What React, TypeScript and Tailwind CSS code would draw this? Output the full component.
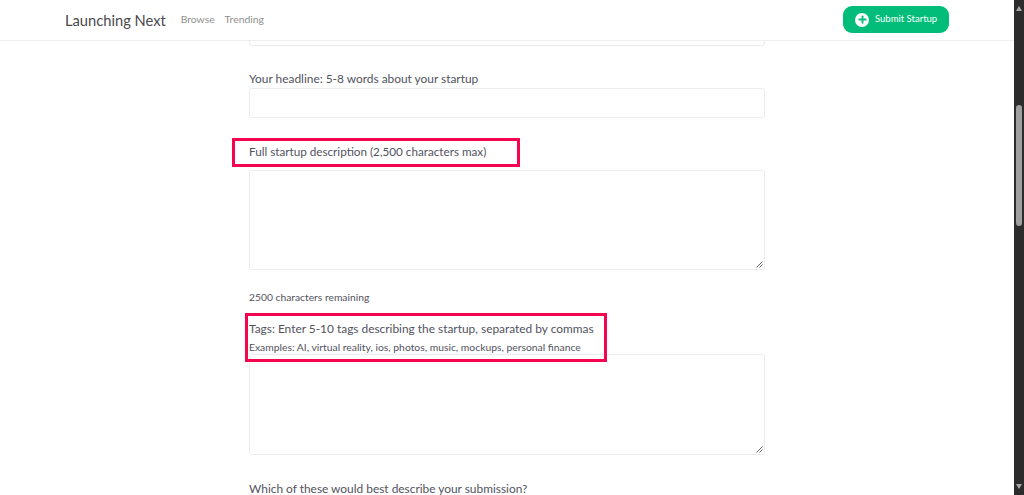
import { Plus } from "lucide-react";

const fieldClass = "block w-full rounded-[3px] border border-[#ececec] bg-white";

function Resizer() {
  return (
    <svg className="absolute right-[1px] bottom-[1px]" width="7" height="7" viewBox="0 0 7 7">
      <path d="M6.5 0.5L0.5 6.5M6.5 3.5L3.5 6.5" stroke="#666" strokeWidth="1" fill="none" />
    </svg>
  );
}

export default function App() {
  return (
    <div className="flex h-[495px] w-[1024px] overflow-hidden bg-white font-['Lato',sans-serif] text-[#52525e]">
      <div className="relative flex h-full w-[1014px] flex-col overflow-hidden">
        <header className="flex h-[41px] shrink-0 items-center border-b border-[#f0f0f0] pl-[65px] pr-[65px]">
          <span className="text-[14.7px] text-[#4a4a4a]">Launching Next</span>
          <a className="ml-[15px] text-[10.3px] text-[#8f8f8f]">Browse</a>
          <a className="ml-[10px] text-[10.4px] text-[#8f8f8f]">Trending</a>
          <button className="ml-auto mb-[1px] flex h-[27px] w-[106px] items-center rounded-[9px] bg-[#02bd7a] pl-[12px] text-[9.5px] text-white">
            <span className="mr-[6px] flex h-[14px] w-[14px] items-center justify-center rounded-full bg-white">
              <Plus size={11} strokeWidth={4} className="text-[#02bd7a]" />
            </span>
            Submit Startup
          </button>
        </header>

        <form className="w-[516px] ml-[249px]">
          <div className={`${fieldClass} h-[5px] rounded-t-none border-t-0`} />

          <label className="mt-[24px] block text-[11.9px] leading-[17px]">Your headline: 5-8 words about your startup</label>
          <div className={`${fieldClass} mt-[1px] h-[30px]`} />

          <label className="mt-[25px] block text-[11.7px] leading-[17px]">Full startup description (2,500 characters max)</label>
          <div className={`${fieldClass} relative mt-[10px] h-[100px]`}>
            <Resizer />
          </div>

          <p className="mt-[20px] text-[10.3px] leading-[14px]">2500 characters remaining</p>

          <label className="mt-[16px] block text-[11.9px] leading-[17px]">Tags: Enter 5-10 tags describing the startup, separated by commas</label>
          <p className="mt-[3px] text-[10.35px] leading-[14px]">Examples: AI, virtual reality, ios, photos, music, mockups, personal finance</p>
          <div className={`${fieldClass} relative h-[101px]`}>
            <Resizer />
          </div>

          <label className="mt-[25px] block text-[11.9px] leading-[17px]">Which of these would best describe your submission?</label>
        </form>

        {/* annotation boxes drawn over the form */}
        <div className="absolute left-[232px] top-[138px] h-[29px] w-[288px] border-[3px] border-[#f5054f]" />
        <div className="absolute left-[245px] top-[313px] h-[49px] w-[362px] border-[3px] border-[#f5054f]" />
      </div>

      {/* scrollbar */}
      <div className="flex h-full w-[10px] flex-col items-center justify-between bg-[#2c2c2c] py-[6px]">
        <svg width="6" height="5" viewBox="0 0 6 5"><path d="M3 0L6 5H0Z" fill="#a8a8a8" /></svg>
        <svg width="6" height="5" viewBox="0 0 6 5"><path d="M0 0H6L3 5Z" fill="#a8a8a8" /></svg>
      </div>
      <div className="absolute left-[1016px] top-[105px] h-[121px] w-[6px] rounded-[3px] bg-[#9f9f9f]" />
    </div>
  );
}
